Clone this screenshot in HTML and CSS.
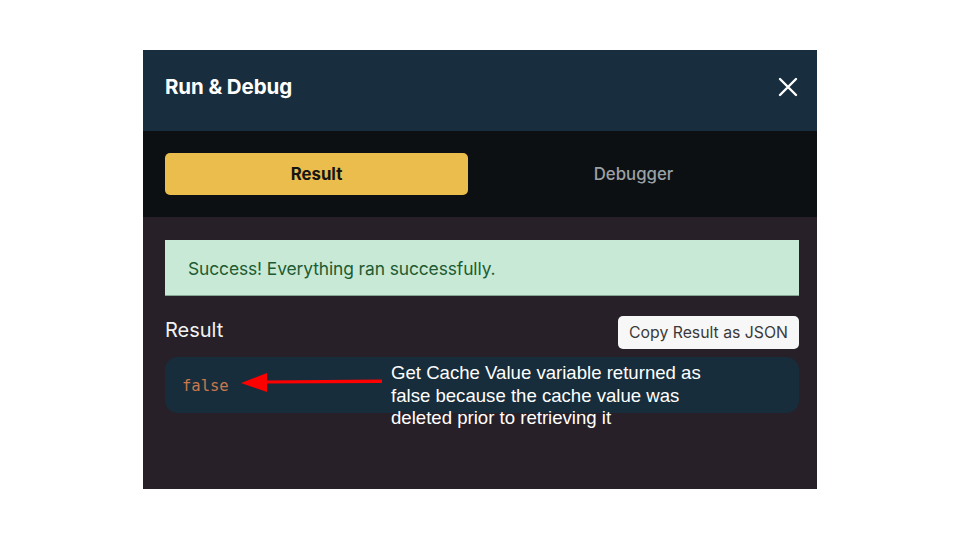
FILE: index.html
```html
<!DOCTYPE html>
<html>
<head>
<meta charset="utf-8">
<link rel="stylesheet" href="styles.css">
</head>
<body>
<div class="panel">
  <div class="header">
    <div class="title">Run &amp; Debug</div>
    <svg class="close" width="20" height="20" viewBox="0 0 20 20"><path d="M2 2 L18 18 M18 2 L2 18" stroke="#ffffff" stroke-width="2.4" stroke-linecap="round"/></svg>
  </div>
  <div class="tabs">
    <div class="tab active">Result</div>
    <div class="tab">Debugger</div>
  </div>
  <div class="content">
    <div class="alert">Success! Everything ran successfully.</div>
    <div class="result-row">
      <div class="result-label">Result</div>
      <div class="copy-btn">Copy Result as JSON</div>
    </div>
    <div class="result-box">
      <span class="value">false</span>
      <svg class="arrow" width="145" height="22" viewBox="0 0 145 22"><path d="M24 9.5 L141 8.5 L141 12 L24 12.5 Z" fill="#ff0000"/><path d="M0 12 L26 2 L26 21 Z" fill="#ff0000"/></svg>
      <div class="note">Get Cache Value variable returned as<br>false because the cache value was<br>deleted prior to retrieving it</div>
    </div>
  </div>
</div>
</body>
</html>
```
FILE: styles.css
```css
html, body {
  margin: 0;
  background: #ffffff;
}
body {
  padding: 50px 0 0 143px;
  font-family: Inter, "Noto Sans", sans-serif;
}
.panel {
  width: 674px;
  height: 439px;
  background: #272029;
  display: flex;
  flex-direction: column;
}
.header {
  height: 81px;
  box-sizing: border-box;
  background: #182e3e;
  display: flex;
  justify-content: space-between;
  align-items: flex-start;
  padding: 25px 19px 0 22px;
}
.title {
  color: #ffffff;
  font-weight: 700;
  font-size: 20.5px;
  line-height: 24px;
  letter-spacing: -0.1px;
}
.close {
  margin-top: 2px;
}
.tabs {
  height: 86px;
  box-sizing: border-box;
  background: #0d1012;
  padding: 22px 18px 22px 22px;
  display: flex;
}
.tab {
  flex: 1;
  display: flex;
  align-items: center;
  justify-content: center;
  font-size: 16.8px;
  color: #9aa1a6;
  font-weight: 500;
}
.tab.active {
  flex: 0 0 303px;
  background: #ebbd4c;
  color: #151515;
  font-weight: 700;
  border-radius: 5px;
}
.content {
  padding: 23px 18px 0 22px;
}
.alert {
  height: 56px;
  box-sizing: border-box;
  background: #c8e9d5;
  border-bottom: 1px solid #86a892;
  color: #1d5b33;
  font-size: 17.4px;
  display: flex;
  align-items: center;
  padding: 2px 23px 0 23px;
  letter-spacing: -0.1px;
}
.result-row {
  display: flex;
  justify-content: space-between;
  align-items: center;
  margin-top: 20px;
}
.result-label {
  color: #f2f2f2;
  font-size: 20px;
  margin-top: -5px;
}
.copy-btn {
  height: 33px;
  box-sizing: border-box;
  background: #f7f7f7;
  border-radius: 5px;
  color: #3a3a3a;
  font-size: 15.8px;
  padding: 0 11px;
  display: flex;
  align-items: center;
}
.result-box {
  position: relative;
  margin-top: 8px;
  height: 56px;
  box-sizing: border-box;
  background: #172d3c;
  border-radius: 13px;
  padding: 0 17px;
  display: flex;
  align-items: center;
}
.value {
  font-family: "DejaVu Sans Mono", "Liberation Mono", monospace;
  font-size: 15.5px;
  color: #c9774d;
  margin-top: 2px;
}
.arrow {
  position: absolute;
  left: 76px;
  top: 14px;
}
.note {
  position: absolute;
  left: 226px;
  top: 5px;
  width: 360px;
  font-family: "Liberation Sans", Arial, sans-serif;
  font-size: 18.6px;
  line-height: 22.7px;
  color: #ffffff;
}
```
